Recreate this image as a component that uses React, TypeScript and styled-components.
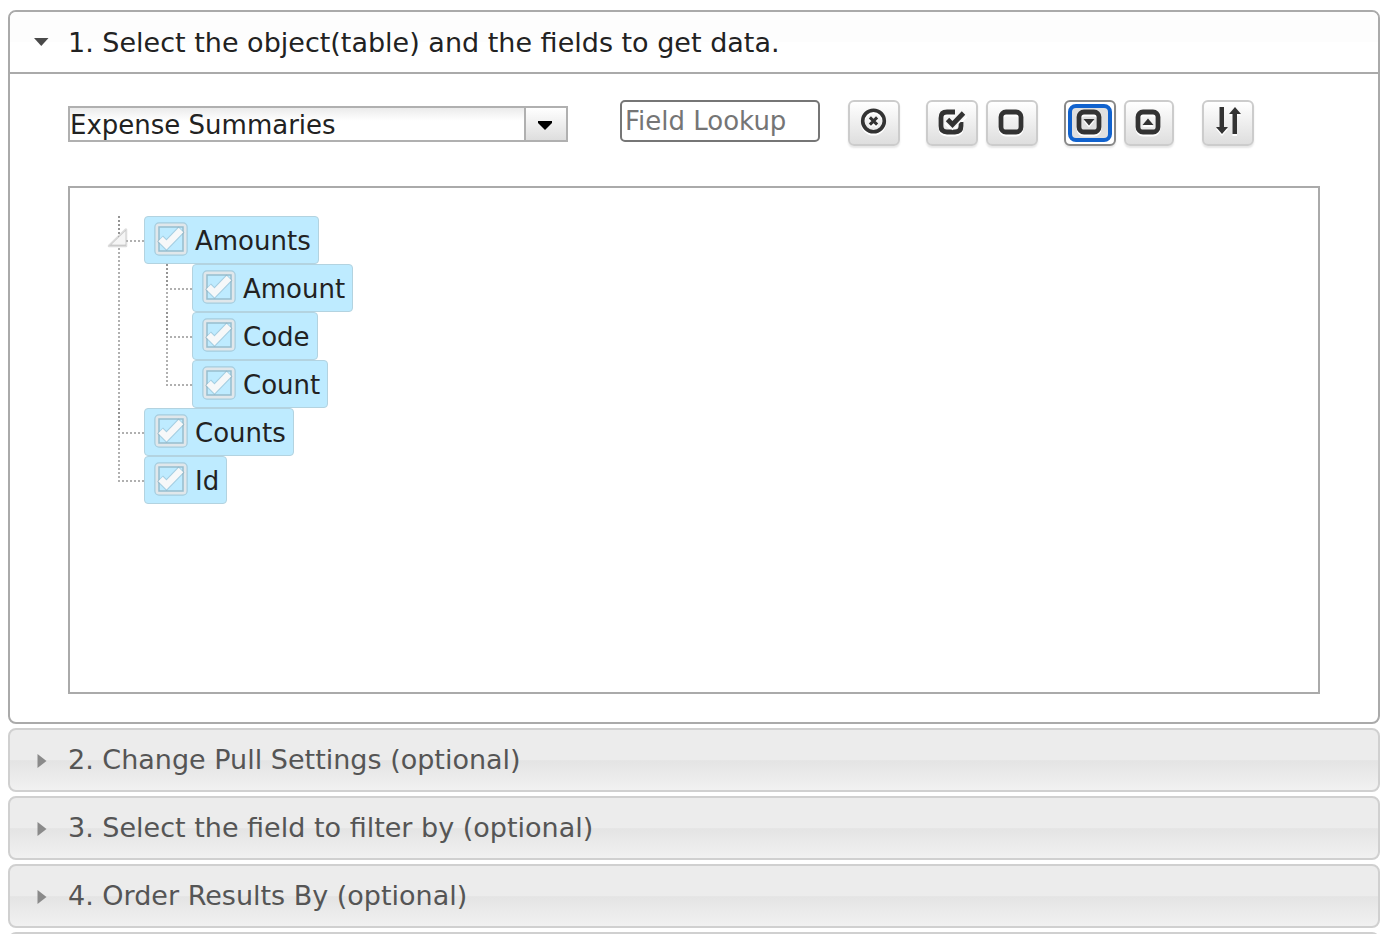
import React, { useState } from "react";
import styled, { createGlobalStyle, css } from "styled-components";

const GlobalStyle = createGlobalStyle`
  *, *::before, *::after { box-sizing: border-box; }
  body { margin: 0; background: #fff; }
  button, input, select { font: inherit; color: inherit; }
`;

const Page = styled.main`
  height: 100vh;
  overflow: hidden;
  padding: 10px 6px 0 8px;
  display: flex;
  flex-direction: column;
  gap: 4px;
  font-family: Verdana, "DejaVu Sans", sans-serif;
  font-size: 26px;
  line-height: 32px;
  color: #222;
`;

const Section = styled.section`
  flex: none;
  border: 2px solid #aaa;
  border-radius: 8px;
  background: #fff;
`;

const Heading = styled.h3`
  flex: none;
  margin: 0;
  font-size: 27px;
  font-weight: normal;
`;

const HeaderButton = styled.button<{ $open?: boolean }>`
  display: flex;
  align-items: center;
  gap: 19px;
  width: 100%;
  padding: 0 22px 0 23px;
  text-align: left;
  cursor: pointer;
  ${(p) =>
    p.$open
      ? css`
          height: 62px;
          padding-top: 2px;
          border: 0;
          border-bottom: 2px solid #aaa;
          border-radius: 6px 6px 0 0;
          background: linear-gradient(#fdfdfd 0 50%, #fff 50%);
          color: #222;
        `
      : css`
          height: 64px;
          border: 2px solid #d0d0d0;
          border-radius: 8px;
          background: linear-gradient(#ececec 0 50%, #e4e4e4 51%, #f1f1f1);
          color: #555;
        `}
`;

const HeaderIcon = styled.svg`
  flex: none;
  width: 16px;
  height: 16px;
`;

const Body = styled.div`
  padding: 26px 58px 28px;
`;

const Toolbar = styled.div`
  display: flex;
  align-items: flex-start;
  margin-bottom: 40px;
`;

const SelectBox = styled.div`
  display: grid;
  grid-template-columns: 1fr 42px;
  grid-template-rows: 32px;
  width: 500px;
  height: 36px;
  margin: 6px 52px 0 0;
  border: 2px solid #b0b0b0;
  background: linear-gradient(#ebebeb, #fff 40%);
`;

const Select = styled.select`
  grid-area: 1 / 1 / 2 / 3;
  appearance: none;
  width: 100%;
  height: 32px;
  padding: 1px 0 0;
  border: 0;
  outline: 0;
  background: transparent;
`;

const SelectArrow = styled.span`
  grid-area: 1 / 2 / 2 / 3;
  display: flex;
  align-items: center;
  justify-content: center;
  padding: 4px 2px 0 0;
  border-left: 2px solid #b0b0b0;
  background: linear-gradient(#fff, #dedede);
  pointer-events: none;
`;

const Lookup = styled.input`
  width: 200px;
  height: 42px;
  margin-right: 28px;
  padding: 0 3px;
  border: 2px solid #767676;
  border-radius: 5px;
  background: #fff;
  &::placeholder { color: #757575; opacity: 1; }
`;

const ButtonGroup = styled.div`
  display: flex;
  gap: 8px;
  margin-right: 26px;
  & + & + & { margin-right: 28px; }
`;

const ToolButton = styled.button<{ $active?: boolean; $narrow?: boolean }>`
  display: flex;
  width: ${(p) => (p.$narrow ? 50 : 52)}px;
  height: 46px;
  padding: 2px 2px ${(p) => (p.$active ? 2 : 4)}px;
  border: 2px solid ${(p) => (p.$active ? "#888" : "#ccc")};
  border-radius: 6px;
  background: ${(p) => (p.$active ? "#fff" : "linear-gradient(#fff, #dedede)")};
  box-shadow: 0 2px 2px rgba(0, 0, 0, 0.1);
  cursor: pointer;
  outline: 0;
`;

const ButtonFace = styled.span<{ $active?: boolean }>`
  display: flex;
  flex: 1;
  height: 38px;
  align-items: center;
  justify-content: center;
  border: 4px solid ${(p) => (p.$active ? "#1062ce" : "transparent")};
  border-radius: 8px;
  background: ${(p) => (p.$active ? "#e0e0e0" : "transparent")};
`;

const ToolIcon = styled.svg`
  flex: none;
  width: 28px;
  height: 28px;
  overflow: visible;
  fill: none;
  stroke: #333;
  filter: drop-shadow(0 2px 0 #fff);
`;

const TreePanel = styled.div`
  min-height: 508px;
  padding: 28px 48px;
  border: 2px solid #aaa;
`;

const Branch = styled.ul<{ $nested?: boolean }>`
  margin: 0 0 0 ${(p) => (p.$nested ? 22 : 0)}px;
  padding: 0;
  list-style: none;
`;

const dots = (angle: string, color: string) =>
  `repeating-linear-gradient(${angle}, ${color} 0 2px, transparent 2px 4px)`;

const Item = styled.li<{ $last?: boolean }>`
  position: relative;
  padding-left: 26px;
  background-image: ${dots("90deg", "#b0b0b0")}, ${(p) => dots("180deg", p.$last ? "#b0b0b0" : "#949494")},
    ${dots("180deg", "#b0b0b0")};
  background-repeat: no-repeat;
  background-position: 0 24px, 0 0, 0 0;
  background-size: 26px 2px, 2px 24px, 2px ${(p) => (p.$last ? "26px" : "100%")};
`;

const Expander = styled.button`
  position: absolute;
  top: 11px;
  left: -11px;
  width: 24px;
  height: 24px;
  padding: 0;
  border: 0;
  background: none;
  cursor: pointer;
  svg { display: block; }
`;

const NodeLabel = styled.label<{ $checked: boolean }>`
  display: flex;
  align-items: center;
  gap: 6px;
  width: max-content;
  height: 48px;
  padding: 2px 7px 0 8px;
  border: 1px solid ${(p) => (p.$checked ? "#b3d3e0" : "transparent")};
  border-radius: 4px;
  background: ${(p) => (p.$checked ? "#beebff" : "#fff")};
  cursor: pointer;
`;

const CheckBox = styled.span`
  display: grid;
  width: 36px;
  height: 36px;
  margin-bottom: 5px;
  input, svg { grid-area: 1 / 1; }
  input { appearance: none; width: 36px; height: 36px; margin: 0; }
  svg { pointer-events: none; }
`;

const CheckIcon = ({ checked }: { checked: boolean }) => (
  <svg width="36" height="36" viewBox="0 0 36 36" fill="none" aria-hidden="true">
    <rect x="2.500" y="2.500" width="31" height="31" rx="3.500" stroke="#7f9dab" strokeOpacity=".4" strokeWidth="2.500" />
    <rect x="4" y="4" width="28" height="28" rx="2" stroke="#e0e7eb" strokeWidth="3" />
    <rect x="6" y="6" width="24" height="24" stroke="#8fb2c1" strokeOpacity=".8" strokeWidth="1.500" />
    {checked && (
      <g strokeLinejoin="miter">
        <path d="M7 17.500L13.500 24L28.500 8.500" stroke="#7fa3b3" strokeOpacity=".4" strokeWidth="8.500" />
        <path d="M7.500 18L13.500 24L28 9" stroke="#f6f8f9" strokeWidth="6.400" />
      </g>
    )}
  </svg>
);

const roundedBox = <rect x="4" y="4" width="20" height="20" rx="5" strokeWidth="4.800" />;

const icons: Record<string, React.ReactNode> = {
  clear: (
    <>
      <circle cx="14.500" cy="13" r="10.800" strokeWidth="3.600" />
      <path d="M10.900 9.400l7.200 7.200M18.100 9.400l-7.200 7.200" strokeWidth="3" />
    </>
  ),
  checkAll: (
    <>
      <path d="M18 4H10Q4 4 4 10V18Q4 24 10 24H18Q24 24 24 18V14" strokeWidth="4.800" />
      <path d="M10 11L15.500 16.500L27.500 4.500" stroke="#f6f6f6" strokeWidth="8" />
      <path d="M10.500 11.500L15.500 16.500L26.500 5" strokeWidth="4.800" />
    </>
  ),
  uncheckAll: roundedBox,
  expand: (
    <>
      {roundedBox}
      <path d="M8.500 11h11L14 17.500z" fill="#333" stroke="none" />
    </>
  ),
  collapse: (
    <>
      {roundedBox}
      <path d="M8.500 17h11L14 10.500z" fill="#333" stroke="none" />
    </>
  ),
  sort: (
    <path
      d="M6.500 -1h4.500v20h4L9 26L3 19h3.500zM19.500 26h4.500V6h4L22 -1L16 6h3.500z"
      fill="#333"
      stroke="none"
    />
  ),
};

type ToolProps = { icon: string; label: string; active?: boolean; narrow?: boolean };

const Tool = ({ icon, label, active, narrow }: ToolProps) => (
  <ToolButton type="button" aria-label={label} $active={active} $narrow={narrow}>
    <ButtonFace $active={active}>
      <ToolIcon viewBox="1 1 28 28" aria-hidden="true">{icons[icon]}</ToolIcon>
    </ButtonFace>
  </ToolButton>
);

type TreeNode = { name: string; children?: TreeNode[] };

const fields: TreeNode[] = [
  { name: "Amounts", children: [{ name: "Amount" }, { name: "Code" }, { name: "Count" }] },
  { name: "Counts" },
  { name: "Id" },
];

const Node = ({ node, last }: { node: TreeNode; last: boolean }) => {
  const [checked, setChecked] = useState(true);
  const [open, setOpen] = useState(true);
  return (
    <Item $last={last}>
      {node.children && (
        <Expander type="button" aria-label={`Toggle ${node.name}`} aria-expanded={open} onClick={() => setOpen(!open)}>
          <svg width="24" height="24" viewBox="0 0 24 24" aria-hidden="true">
            <path d="M2 19L19 2.500V19z" fill="#d8d8d8" stroke="#bbb" strokeOpacity=".5" strokeWidth="2.500" strokeLinejoin="round" />
            <path d="M4.500 17.500L18.500 4V17.500z" fill="#f5f5f5" />
          </svg>
        </Expander>
      )}
      <NodeLabel $checked={checked}>
        <CheckBox>
          <input type="checkbox" checked={checked} onChange={() => setChecked(!checked)} />
          <CheckIcon checked={checked} />
        </CheckBox>
        {node.name}
      </NodeLabel>
      {node.children && open && (
        <Branch $nested>
          {node.children.map((c, i) => (
            <Node key={c.name} node={c} last={i === node.children!.length - 1} />
          ))}
        </Branch>
      )}
    </Item>
  );
};

const closedSections = [
  "2. Change Pull Settings (optional)",
  "3. Select the field to filter by (optional)",
  "4. Order Results By (optional)",
];

export default function App() {
  return (
    <>
      <GlobalStyle />
      <Page>
        <Section>
          <Heading>
            <HeaderButton type="button" aria-expanded="true" $open>
              <HeaderIcon viewBox="0 0 16 16" aria-hidden="true">
                <path d="M1 3h14.500L8.250 11z" fill="#4a4a4a" />
              </HeaderIcon>
              1. Select the object(table) and the fields to get data.
            </HeaderButton>
          </Heading>
          <Body>
            <Toolbar>
              <SelectBox>
                <Select aria-label="Object">
                  <option>Expense Summaries</option>
                </Select>
                <SelectArrow>
                  <svg width="14" height="10" viewBox="0 0 14 10" aria-hidden="true">
                    <path d="M0 0h14v2L7 9L0 2z" fill="#000" />
                  </svg>
                </SelectArrow>
              </SelectBox>
              <Lookup type="text" aria-label="Field Lookup" placeholder="Field Lookup" />
              <ButtonGroup>
                <Tool icon="clear" label="Clear lookup" />
              </ButtonGroup>
              <ButtonGroup>
                <Tool icon="checkAll" label="Check all" />
                <Tool icon="uncheckAll" label="Uncheck all" />
              </ButtonGroup>
              <ButtonGroup>
                <Tool icon="expand" label="Expand all" active />
                <Tool icon="collapse" label="Collapse all" narrow />
              </ButtonGroup>
              <ButtonGroup>
                <Tool icon="sort" label="Sort fields" />
              </ButtonGroup>
            </Toolbar>
            <TreePanel>
              <Branch>
                {fields.map((f, i) => (
                  <Node key={f.name} node={f} last={i === fields.length - 1} />
                ))}
              </Branch>
            </TreePanel>
          </Body>
        </Section>
        {closedSections.map((title) => (
          <Heading key={title}>
            <HeaderButton type="button" aria-expanded="false">
              <HeaderIcon viewBox="0 0 16 16" aria-hidden="true">
                <path d="M4.500 2v14L13.500 9z" fill="#8a8a8a" />
              </HeaderIcon>
              {title}
            </HeaderButton>
          </Heading>
        ))}
        <Heading>
          <HeaderButton type="button" aria-label="Next step" aria-expanded="false" />
        </Heading>
      </Page>
    </>
  );
}
